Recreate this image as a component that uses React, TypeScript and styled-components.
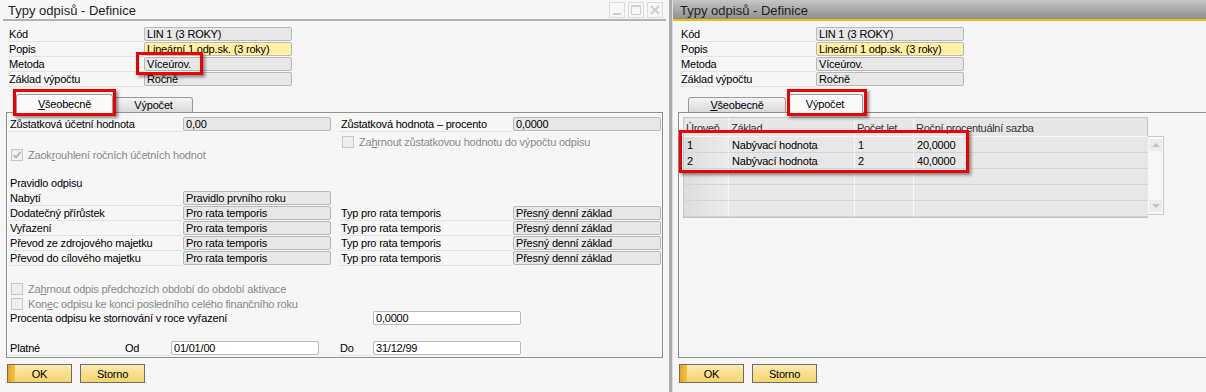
import styled, { createGlobalStyle } from "styled-components";

const GlobalStyle = createGlobalStyle`
  html, body {
    margin: 0;
    padding: 0;
    background: #f6f6f6;
  }
  body {
    font-family: "Liberation Sans", Arial, sans-serif;
    font-size: 11px;
    letter-spacing: -0.2px;
    color: #000;
  }
`;

const Screen = styled.div`
  display: flex;
  width: 1206px;
  height: 392px;
  overflow: hidden;
  background: #f6f6f6;
`;

const Window = styled.div<{ $width?: number }>`
  position: relative;
  display: flex;
  flex-direction: column;
  width: ${({ $width }) => ($width ? `${$width}px` : "auto")};
  flex: ${({ $width }) => ($width ? "none" : "1")};
  min-width: 0;
`;

const Separator = styled.div`
  width: 3px;
  flex: none;
  background: #ababab;
  border-right: 1px solid #dedede;
`;

const TitleBar = styled.div<{ $active?: boolean }>`
  display: flex;
  align-items: center;
  justify-content: space-between;
  height: 21px;
  padding: 1px 3px 0 8px;
  box-sizing: border-box;
  margin: 0 ${({ $active }) => ($active ? "0" : "3px")} 0 ${({ $active }) => ($active ? "0" : "3px")};
  padding-left: ${({ $active }) => ($active ? "7px" : "5px")};
  background: ${({ $active }) =>
    $active ? "linear-gradient(#c6c6c6, #8e8e8e)" : "#f7f7f7"};
  border-bottom: 2px solid ${({ $active }) => ($active ? "#f4b71a" : "#b2b2b2")};
  font-size: 13px;
  letter-spacing: 0;
  color: #1e1e1e;
`;

const WinButtons = styled.div`
  display: flex;
  gap: 3px;
  margin-top: -1px;
`;

const WinButton = styled.div`
  width: 14px;
  height: 14px;
  border: 1px solid #dcdcdc;
  display: flex;
  align-items: center;
  justify-content: center;
`;

const Header = styled.div<{ $left: number }>`
  display: flex;
  flex-direction: column;
  padding: 6px 0 0 ${({ $left }) => $left}px;
`;

const HeaderRow = styled.div`
  display: grid;
  grid-template-columns: 136px 148px;
  height: 15px;
`;

const Label = styled.div<{ $muted?: boolean; $line?: boolean }>`
  display: flex;
  align-items: center;
  padding-left: 1px;
  height: 14px;
  white-space: nowrap;
  color: ${({ $muted }) => ($muted ? "#8a8a8a" : "#000")};
  border-bottom: 1px solid ${({ $line }) => ($line === false ? "transparent" : "#dfe4ea")};
`;

const Field = styled.div<{ $tone?: "gray" | "yellow" | "white" }>`
  box-sizing: border-box;
  height: 14px;
  display: flex;
  align-items: center;
  padding-left: 2px;
  border: 1px solid #b9b9b9;
  border-radius: 2px;
  white-space: nowrap;
  background: ${({ $tone }) =>
    $tone === "yellow" ? "#fff0a2" : $tone === "white" ? "#ffffff" : "#e7e7e7"};
`;

const TabStrip = styled.div<{ $left: number }>`
  display: flex;
  align-items: flex-end;
  height: 21px;
  margin-top: 4px;
  padding-left: ${({ $left }) => $left}px;
`;

const Tab = styled.div<{ $active?: boolean; $w: number }>`
  box-sizing: border-box;
  width: ${({ $w }) => $w}px;
  height: ${({ $active }) => ($active ? 19 : 15)}px;
  margin-right: 1px;
  display: flex;
  align-items: center;
  justify-content: center;
  border: 1px solid #9a9a9a;
  border-bottom: none;
  border-radius: 3px 3px 0 0;
  background: ${({ $active }) =>
    $active ? "#fafafa" : "linear-gradient(#f4f4f4, #d9d9d9)"};
  font-size: 11px;
  position: relative;
  top: ${({ $active }) => ($active ? 1 : 0)}px;
`;

const Key = styled.span`
  text-decoration: underline;
`;

const Panel = styled.div<{ $left: number; $right: number }>`
  box-sizing: border-box;
  height: 246px;
  margin: 0 ${({ $right }) => $right}px 0 ${({ $left }) => $left}px;
  border: 1px solid #8e8e8e;
  display: flex;
  flex-direction: column;
  padding: 4px 0 0 2px;
`;

const PanelRow = styled.div`
  display: grid;
  grid-template-columns: 174px 148px 9px 173px 148px;
  height: 15px;
`;

const Gap = styled.div<{ $h: number }>`
  height: ${({ $h }) => $h}px;
  flex: none;
`;

const CheckRow = styled.div<{ $indent?: number; $shift?: number }>`
  display: flex;
  align-items: center;
  height: 15px;
  margin-top: ${({ $shift }) => $shift ?? 0}px;
  padding-left: ${({ $indent }) => $indent ?? 2}px;
  gap: 5px;
  color: #8a8a8a;
  white-space: nowrap;
`;

const Box = styled.div`
  box-sizing: border-box;
  width: 12px;
  height: 12px;
  border: 1px solid #c8c8c8;
  background: #efefef;
  display: flex;
  align-items: center;
  justify-content: center;
`;

const PercentRow = styled.div`
  display: grid;
  grid-template-columns: 364px 148px;
  height: 15px;
`;

const DateRow = styled.div`
  display: grid;
  grid-template-columns: 54px 108px 148px 20px 34px 148px;
  height: 15px;
`;

const DateLabel = styled(Label)`
  padding-left: 62px;
`;

const Buttons = styled.div<{ $left: number }>`
  display: flex;
  gap: 8px;
  padding: 6px 0 0 ${({ $left }) => $left}px;
`;

const Button = styled.div<{ $primary?: boolean }>`
  box-sizing: border-box;
  width: 65px;
  height: 19px;
  border: 1px solid #6c6c6c;
  display: flex;
  align-items: center;
  justify-content: center;
  background: ${({ $primary }) =>
    $primary
      ? "linear-gradient(90deg, #f0a21c 0, #f6c33c 7px, transparent 7px), linear-gradient(#faeab0, #f5d46c)"
      : "linear-gradient(#faeab0, #f5d46c)"};
`;

const Grid = styled.div`
  display: flex;
  margin: 0 0 0 2px;
`;

const Table = styled.div`
  display: grid;
  grid-template-columns: 45px 126px 59px 235px;
  grid-template-rows: 19px repeat(5, 16px);
  border: 1px solid #c4c4c4;
  background: #e6e6e6;
  width: 465px;
  box-sizing: border-box;
`;

const HeadCell = styled.div`
  display: flex;
  align-items: flex-end;
  padding: 0 0 2px 2px;
  color: #333;
  letter-spacing: -0.3px;
  border-right: 1px solid #f6f6f6;
  border-bottom: 1px solid #f6f6f6;
  white-space: nowrap;
  overflow: hidden;
`;

const Cell = styled.div<{ $first?: boolean }>`
  display: flex;
  align-items: center;
  padding-left: 3px;
  border-right: 1px solid #f6f6f6;
  border-bottom: 1px solid #d4d4d4;
  background: ${({ $first }) => ($first ? "linear-gradient(90deg, #dcdcdc, #ececec)" : "#e7e7e7")};
  white-space: nowrap;
`;

const Scroll = styled.div`
  margin-top: 19px;
  width: 16px;
  height: 79px;
  border: 1px solid #cbcbcb;
  border-left: none;
  background: #f8f8f8;
  display: flex;
  flex-direction: column;
  justify-content: space-between;
  align-items: center;
  padding: 2px 0;
  box-sizing: border-box;
`;

const Arrow = styled.div<{ $down?: boolean }>`
  width: 13px;
  height: 12px;
  background: #ececec;
  display: flex;
  align-items: center;
  justify-content: center;
  &::after {
    content: "";
    border-left: 4px solid transparent;
    border-right: 4px solid transparent;
    ${({ $down }) => ($down ? "border-top" : "border-bottom")}: 4px solid #c4c4c4;
  }
`;

const Highlight = styled.div<{ $x: number; $y: number; $w: number; $h: number }>`
  position: absolute;
  left: ${({ $x }) => $x}px;
  top: ${({ $y }) => $y}px;
  width: ${({ $w }) => $w}px;
  height: ${({ $h }) => $h}px;
  box-sizing: border-box;
  border: 3px solid #ee0000;
  box-shadow: 2px 2px 3px rgba(0, 0, 0, 0.45);
  pointer-events: none;
`;

const headerRows: [string, string, "gray" | "yellow"][] = [
  ["Kód", "LIN 1 (3 ROKY)", "gray"],
  ["Popis", "Lineární 1 odp.sk. (3 roky)", "yellow"],
  ["Metoda", "Víceúrov.", "gray"],
  ["Základ výpočtu", "Ročně", "gray"],
];

const ruleRows = [
  "Dodatečný přírůstek",
  "Vyřazení",
  "Převod ze zdrojového majetku",
  "Převod do cílového majetku",
];

const levels = [
  ["1", "Nabývací hodnota", "1", "20,0000"],
  ["2", "Nabývací hodnota", "2", "40,0000"],
  ["", "", "", ""],
  ["", "", "", ""],
  ["", "", "", ""],
];

function Check({ checked }: { checked?: boolean }) {
  return (
    <Box>
      {checked && (
        <svg width="10" height="10" viewBox="0 0 10 10">
          <path d="M1.5 5 L4 7.5 L8.5 2" stroke="#a8a8a8" strokeWidth="1.4" fill="none" />
        </svg>
      )}
    </Box>
  );
}

function HeaderFields({ left }: { left: number }) {
  return (
    <Header $left={left}>
      {headerRows.map(([label, value, tone]) => (
        <HeaderRow key={label}>
          <Label>{label}</Label>
          <Field $tone={tone}>{value}</Field>
        </HeaderRow>
      ))}
    </Header>
  );
}

function TitleText({ active }: { active?: boolean }) {
  return (
    <TitleBar $active={active}>
      <span>Typy odpisů - Definice</span>
      {!active && (
        <WinButtons>
          <WinButton>
            <svg width="12" height="12" viewBox="0 0 12 12">
              <rect x="2" y="9" width="8" height="2" fill="#d0d0d0" />
            </svg>
          </WinButton>
          <WinButton>
            <svg width="12" height="12" viewBox="0 0 12 12">
              <rect x="1.5" y="1.5" width="9" height="9" fill="none" stroke="#cfcfcf" />
              <rect x="1" y="1" width="10" height="2" fill="#cfcfcf" />
            </svg>
          </WinButton>
          <WinButton>
            <svg width="12" height="12" viewBox="0 0 12 12">
              <path d="M2 2 L10 10 M10 2 L2 10" stroke="#cfcfcf" strokeWidth="2" />
            </svg>
          </WinButton>
        </WinButtons>
      )}
    </TitleBar>
  );
}

function GeneralWindow() {
  return (
    <Window $width={669}>
      <TitleText />
      <HeaderFields left={8} />
      <TabStrip $left={16}>
        <Tab $active $w={97}>
          <span>
            <Key>V</Key>šeobecně
          </span>
        </Tab>
        <Tab $w={79}>Výpočet</Tab>
      </TabStrip>
      <Panel $left={6} $right={6}>
        <PanelRow>
          <Label>Zůstatková účetní hodnota</Label>
          <Field>0,00</Field>
          <span />
          <Label>Zůstatková hodnota – procento</Label>
          <Field>0,0000</Field>
        </PanelRow>
        <CheckRow $indent={333} $shift={2}>
          <Check />
          <span>
            Za<Key>h</Key>rnout zůstatkovou hodnotu do výpočtu odpisu
          </span>
        </CheckRow>
        <CheckRow $shift={-2}>
          <Check checked />
          <span>
            Zaok<Key>r</Key>ouhlení ročních účetních hodnot
          </span>
        </CheckRow>
        <Gap $h={14} />
        <PanelRow>
          <Label $line={false}>Pravidlo odpisu</Label>
        </PanelRow>
        <PanelRow>
          <Label>Nabytí</Label>
          <Field>Pravidlo prvního roku</Field>
        </PanelRow>
        {ruleRows.map((r) => (
          <PanelRow key={r}>
            <Label>{r}</Label>
            <Field>Pro rata temporis</Field>
            <span />
            <Label>Typ pro rata temporis</Label>
            <Field>Přesný denní základ</Field>
          </PanelRow>
        ))}
        <Gap $h={15} />
        <CheckRow>
          <Check />
          <span>
            Za<Key>h</Key>rnout odpis předchozích období do období aktivace
          </span>
        </CheckRow>
        <CheckRow>
          <Check />
          <span>
            Kon<Key>e</Key>c odpisu ke konci posledního celého finančního roku
          </span>
        </CheckRow>
        <PercentRow>
          <Label $line={false}>Procenta odpisu ke stornování v roce vyřazení</Label>
          <Field $tone="white">0,0000</Field>
        </PercentRow>
        <Gap $h={15} />
        <DateRow>
          <Label>Platné</Label>
          <DateLabel>Od</DateLabel>
          <Field $tone="white">01/01/00</Field>
          <span />
          <Label>Do</Label>
          <Field $tone="white">31/12/99</Field>
        </DateRow>
      </Panel>
      <Buttons $left={7}>
        <Button $primary>OK</Button>
        <Button>Storno</Button>
      </Buttons>
      <Highlight $x={136} $y={52} $w={67} $h={23} />
      <Highlight $x={13} $y={89} $w={103} $h={27} />
    </Window>
  );
}

function CalcWindow() {
  return (
    <Window>
      <TitleText active />
      <HeaderFields left={7} />
      <TabStrip $left={15}>
        <Tab $w={98}>
          <span>
            <Key>V</Key>šeobecně
          </span>
        </Tab>
        <Tab $active $w={76}>
          Výpočet
        </Tab>
      </TabStrip>
      <Panel $left={5} $right={-2}>
        <Grid>
          <Table>
            <HeadCell>Úroveň</HeadCell>
            <HeadCell>Základ</HeadCell>
            <HeadCell>Počet let</HeadCell>
            <HeadCell>Roční procentuální sazba</HeadCell>
            {levels.map((row, i) =>
              row.map((c, j) => (
                <Cell key={`${i}-${j}`} $first={j === 0}>
                  {c}
                </Cell>
              ))
            )}
          </Table>
          <Scroll>
            <Arrow />
            <Arrow $down />
          </Scroll>
        </Grid>
      </Panel>
      <Buttons $left={6}>
        <Button $primary>OK</Button>
        <Button>Storno</Button>
      </Buttons>
      <Highlight $x={114} $y={89} $w={80} $h={27} />
      <Highlight $x={6} $y={130} $w={290} $h={43} />
    </Window>
  );
}

export default function App() {
  return (
    <>
      <GlobalStyle />
      <Screen>
        <GeneralWindow />
        <Separator />
        <CalcWindow />
      </Screen>
    </>
  );
}
